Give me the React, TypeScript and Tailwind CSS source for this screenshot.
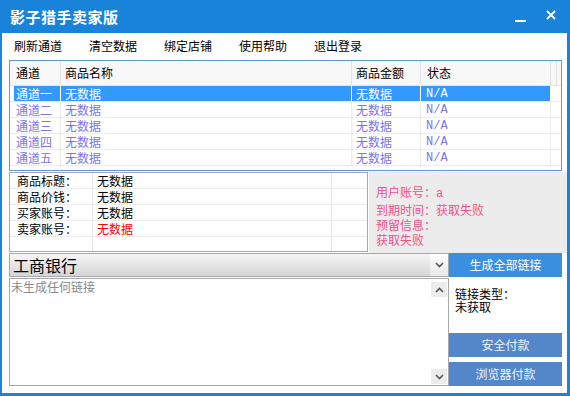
import React from "react";

const menuItems = ["刷新通道", "清空数据", "绑定店铺", "使用帮助", "退出登录"];
const channels = ["通道一", "通道二", "通道三", "通道四", "通道五"];
const infoRows = [
  { label: "商品标题：", value: "无数据", red: false },
  { label: "商品价钱：", value: "无数据", red: false },
  { label: "买家账号：", value: "无数据", red: false },
  { label: "卖家账号：", value: "无数据", red: true },
];

function TitleBar() {
  return (
    <div className="h-[33px] shrink-0 flex items-center pl-[10px] pr-[14px]">
      <span className="text-white font-bold text-[15px] leading-none tracking-[0.5px]">
        影子猎手卖家版
      </span>
      <div className="ml-auto flex items-center gap-[20px]">
        <svg width="11" height="11" viewBox="0 0 11 11" className="mt-[4px]">
          <rect x="0" y="7" width="11" height="2" fill="#fff" />
        </svg>
        <svg width="10" height="10" viewBox="0 0 10 10" className="-mt-[4px]">
          <path d="M1 1 L9 9 M9 1 L1 9" stroke="#fff" strokeWidth="1.8" />
        </svg>
      </div>
    </div>
  );
}

function MenuBar() {
  return (
    <div className="h-[25px] shrink-0 flex items-center pl-[12px] gap-[27px]">
      {menuItems.map((m) => (
        <span key={m} className="text-[12px] leading-none">
          {m}
        </span>
      ))}
    </div>
  );
}

function ChannelTable() {
  return (
    <div className="mt-[2px] ml-[7px] w-[553px] h-[111px] border border-[#5e9ad8] flex flex-col">
      <div className="h-[25px] shrink-0 flex bg-[#f8f8f8] border-b border-[#e6e6e6] pl-[4px]">
        <div className="w-[47px] border-r border-[#e2e2e2] flex items-center pl-[2px]">通道</div>
        <div className="w-[291px] border-r border-[#e2e2e2] flex items-center pl-[4px]">商品名称</div>
        <div className="w-[69px] border-r border-[#e2e2e2] flex items-center pl-[4px]">商品金额</div>
        <div className="w-[130px] border-r border-[#e2e2e2] flex items-center pl-[6px]">状态</div>
        <div className="w-[6px] border-r border-[#e2e2e2]" />
      </div>
      {channels.map((c, i) => {
        const sel = i === 0;
        const rowCls = sel ? "bg-[#3399ff] text-white" : "text-[#7c74ee]";
        const line = sel ? "border-white" : "border-[#ececec]";
        return (
          <div key={c} className="h-[16px] shrink-0 flex pl-[4px] border-b border-[#ececec]">
            <div className={`flex ${rowCls}`}>
              <div className={`w-[47px] border-r ${line} flex items-center pl-[2px]`}>{c}</div>
              <div className={`w-[291px] border-r ${line} flex items-center pl-[4px]`}>无数据</div>
              <div className={`w-[69px] border-r ${line} flex items-center pl-[4px]`}>无数据</div>
              <div className={`w-[130px] border-r ${line} flex items-center pl-[5px] font-['Liberation_Mono',monospace] text-[12px]`}>
                N/A
              </div>
            </div>
          </div>
        );
      })}
    </div>
  );
}

function InfoBox() {
  return (
    <div className="ml-[7px] w-[359px] h-[80px] border border-[#a8a8a8] flex flex-col">
      {infoRows.map((r) => (
        <div key={r.label} className="h-[16px] shrink-0 flex border-b border-[#ececec]">
          <div className="w-[83px] border-r border-[#e4e4e4] flex items-center pl-[7px]">{r.label}</div>
          <div className={`w-[239px] border-r border-[#e4e4e4] flex items-center pl-[4px] ${r.red ? "text-[#ff0000]" : ""}`}>
            {r.value}
          </div>
          <div className="flex-1" />
        </div>
      ))}
      <div className="flex-1 flex">
        <div className="w-[83px] border-r border-[#e4e4e4]" />
        <div className="w-[239px] border-r border-[#e4e4e4]" />
      </div>
    </div>
  );
}

function UserPanel() {
  return (
    <div className="flex-1 ml-[1px] bg-[#ececec] pl-[7px] pt-[12px] text-[#f0518a] leading-[15px] flex flex-col">
      <div>
        用户账号：<span className="font-['Liberation_Mono',monospace] text-[12px]">a</span>
      </div>
      <div>到期时间：获取失败</div>
      <div>预留信息：</div>
      <div>获取失败</div>
    </div>
  );
}

function Chevron({ up }: { up?: boolean }) {
  return (
    <svg width="9" height="6" viewBox="0 0 9 6">
      <path d={up ? "M1 5 L4.5 1.5 L8 5" : "M1 1 L4.5 4.5 L8 1"} stroke="#555" strokeWidth="1.6" fill="none" />
    </svg>
  );
}

export default function App() {
  return (
    <div className="w-[570px] h-[396px] bg-[#1883d8] flex flex-col font-['Noto_Sans_CJK_SC',sans-serif] text-[12px] leading-none text-black">
      <TitleBar />
      <div className="flex-1 ml-[2px] mr-[3px] mb-[3px] bg-white flex flex-col">
        <MenuBar />
        <ChannelTable />
        <div className="mt-[1px] h-[81px] shrink-0 flex">
          <InfoBox />
          <UserPanel />
        </div>
        <div className="h-[24px] shrink-0 flex ml-[7px]">
          <div className="w-[440px] border border-[#a8a8a8] bg-linear-to-b from-[#f6f6f6] to-[#d6d6d6] flex items-center pl-[3px]">
            <span className="text-[16px] leading-none">工商银行</span>
            <div className="ml-auto h-full w-[18px] bg-linear-to-b from-white to-[#e8e8e8] flex items-center justify-center">
              <Chevron />
            </div>
          </div>
          <div className="w-[113px] bg-[#3b8fdf] text-white flex items-center justify-center">生成全部链接</div>
        </div>
        <div className="mt-[1px] h-[108px] shrink-0 flex ml-[7px]">
          <div className="w-[440px] border border-[#a8a8a8] flex">
            <div className="flex-1 pl-[1px] pt-[1px] text-[#888888] leading-[13px]">未生成任何链接</div>
            <div className="w-[16px] mr-[1px] flex flex-col justify-between pt-[3px] pb-[1px]">
              <div className="h-[15px] bg-[#ececec] flex items-center justify-center">
                <Chevron up />
              </div>
              <div className="h-[15px] bg-[#ececec] flex items-center justify-center">
                <Chevron />
              </div>
            </div>
          </div>
          <div className="w-[113px] flex flex-col">
            <div className="pl-[6px] pt-[9px] leading-[13px]">
              <div>链接类型：</div>
              <div>未获取</div>
            </div>
            <div className="mt-auto flex flex-col gap-[5px]">
              <div className="h-[24px] bg-[#5387c9] text-[#eef3fa] flex items-center justify-center">安全付款</div>
              <div className="h-[24px] bg-[#5387c9] text-[#eef3fa] flex items-center justify-center">浏览器付款</div>
            </div>
          </div>
        </div>
      </div>
    </div>
  );
}
